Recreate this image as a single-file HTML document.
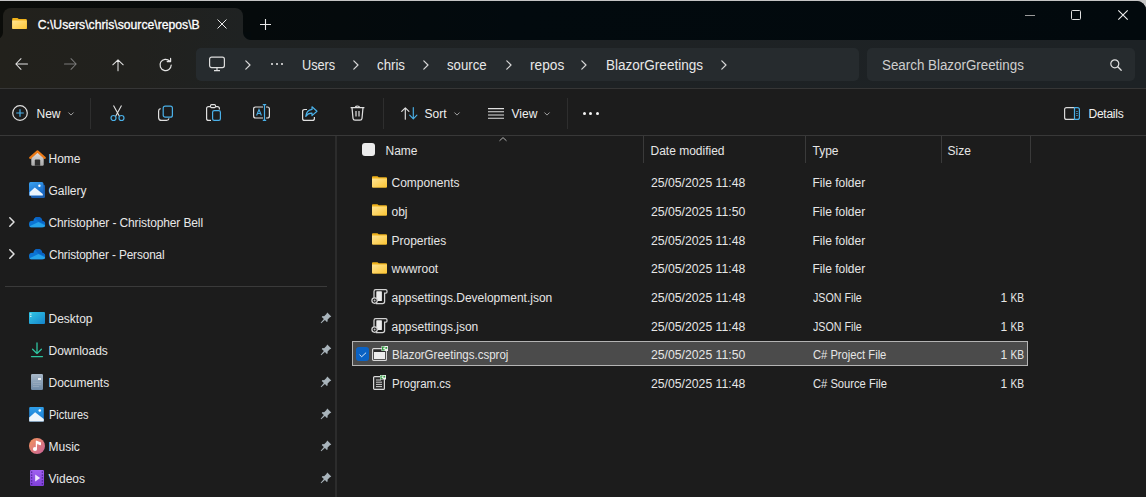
<!DOCTYPE html><html><head><meta charset="utf-8"><style>
html,body{margin:0;padding:0}
body{width:1146px;height:497px;overflow:hidden;position:relative;background:#c4c4c4;font-family:"Liberation Sans",sans-serif}
.a{position:absolute}
.t{position:absolute;white-space:nowrap;line-height:1;}
svg{position:absolute;overflow:visible}
</style></head><body>
<svg width="0" height="0" style="position:absolute"><defs>
<linearGradient id="fg" x1="0" y1="0" x2="1" y2="1"><stop offset="0" stop-color="#ffe494"/><stop offset="1" stop-color="#fbc534"/></linearGradient>
</defs></svg>

<div class="a" style="left:0;top:1px;width:1146px;height:496px;background:#1c1c1c;border-top-right-radius:9px;overflow:hidden">
</div>
<div class="a" style="left:0;top:1px;width:1146px;height:39px;background:linear-gradient(90deg,#0b0c09 0%,#050a0b 22%,#020a0e 45%,#02090d 100%);border-top-right-radius:9px"></div>
<div class="a" style="left:0;top:40px;width:1146px;height:48px;background:linear-gradient(90deg,#22211c 0%,#21211e 12%,#1f2222 21%,#1e2224 50%,#1d2225 100%)"></div>
<div class="a" style="left:3px;top:8px;width:240px;height:33px;background:linear-gradient(90deg,#22211c 0%,#21211e 58%,#1f2222 100%);border-radius:8px 8px 0 0"></div>
<div class="a" style="left:243px;top:32px;width:8px;height:8px;background:radial-gradient(circle at 100% 0, #040a0c 7.5px, #1f2222 8.5px)"></div>
<div class="a" style="left:-5px;top:32px;width:8px;height:8px;background:radial-gradient(circle at 0 0, #0b0c09 7.5px, #22211c 8.5px)"></div>
<svg style="position:absolute;left:12px;top:18px" width="15" height="11" viewBox="0 0 16 12"><path d="M0 1Q0 0 1 0H5.8L7.2 1.2H15Q16 1.2 16 2.2V11Q16 12 15 12H1Q0 12 0 11Z" fill="#f0b21a"/><path d="M0 2.6H16V11Q16 12 15 12H1Q0 12 0 11Z" fill="url(#fg)"/></svg>
<div class="t" style="left:37.8px;top:18.97px;font-size:12.2px;color:#ffffff;-webkit-text-stroke:0.3px #ffffff">C:\Users\chris\source\repos\B</div>
<svg style="left:217px;top:19px" width="10" height="10" viewBox="0 0 10 10"><path d="M0.5 0.5L9.5 9.5M9.5 0.5L0.5 9.5" stroke="#e8e8e8" stroke-width="1"/></svg>
<svg style="left:260px;top:19px" width="11" height="11" viewBox="0 0 11 11"><path d="M5.5 0V11M0 5.5H11" stroke="#e8e8e8" stroke-width="1.1"/></svg>
<div class="a" style="left:1025px;top:15px;width:10px;height:1px;background:#9a9a9a"></div>
<div class="a" style="left:1071px;top:10px;width:8px;height:8px;border:1px solid #e0e0e0;border-radius:1.5px"></div>
<svg style="left:1118px;top:10px" width="10" height="10" viewBox="0 0 10 10"><path d="M0.3 0.3L9.7 9.7M9.7 0.3L0.3 9.7" stroke="#f0f0f0" stroke-width="1.1"/></svg>
<svg style="left:15px;top:58px" width="13" height="12" viewBox="0 0 13 12"><path d="M12.5 6H1M6 0.7L0.8 6L6 11.3" stroke="#e4e4e4" stroke-width="1.05" fill="none" stroke-linecap="round" stroke-linejoin="round"/></svg>
<svg style="left:64px;top:58px" width="13" height="12" viewBox="0 0 13 12"><path d="M0.5 6H12M7 0.7L12.2 6L7 11.3" stroke="#7a7a7a" stroke-width="1.05" fill="none" stroke-linecap="round" stroke-linejoin="round"/></svg>
<svg style="left:111.5px;top:58.5px" width="12" height="13" viewBox="0 0 12 13"><path d="M6 11.8V1M0.8 5.8L6 0.8L11.2 5.8" stroke="#e4e4e4" stroke-width="1.05" fill="none" stroke-linecap="round" stroke-linejoin="round"/></svg>
<svg style="left:159px;top:58px" width="14" height="14" viewBox="0 0 14 14"><path d="M12.2 7A5.6 5.6 0 1 1 10.6 3" stroke="#e4e4e4" stroke-width="1.2" fill="none" stroke-linecap="round"/><path d="M8.2 3.6H11.6V0.4" stroke="#e4e4e4" stroke-width="1.2" fill="none" stroke-linecap="round" stroke-linejoin="round"/></svg>
<div class="a" style="left:196px;top:48px;width:663px;height:33px;background:#262b2e;border-radius:5px"></div>
<svg style="left:209px;top:56px" width="16" height="16" viewBox="0 0 16 16"><rect x="0.6" y="1.2" width="14.8" height="10.4" rx="2" stroke="#dedede" stroke-width="1.2" fill="none"/><path d="M8 11.6V14.2M5 14.6H11" stroke="#dedede" stroke-width="1.2"/></svg>
<svg style="left:245px;top:60px" width="6" height="10" viewBox="0 0 6 10"><path d="M0.8 0.8L5 5L0.8 9.2" stroke="#d8d8d8" stroke-width="1.2" fill="none" stroke-linecap="round" stroke-linejoin="round"/></svg>
<svg style="left:353px;top:60px" width="6" height="10" viewBox="0 0 6 10"><path d="M0.8 0.8L5 5L0.8 9.2" stroke="#d8d8d8" stroke-width="1.2" fill="none" stroke-linecap="round" stroke-linejoin="round"/></svg>
<svg style="left:423px;top:60px" width="6" height="10" viewBox="0 0 6 10"><path d="M0.8 0.8L5 5L0.8 9.2" stroke="#d8d8d8" stroke-width="1.2" fill="none" stroke-linecap="round" stroke-linejoin="round"/></svg>
<svg style="left:506px;top:60px" width="6" height="10" viewBox="0 0 6 10"><path d="M0.8 0.8L5 5L0.8 9.2" stroke="#d8d8d8" stroke-width="1.2" fill="none" stroke-linecap="round" stroke-linejoin="round"/></svg>
<svg style="left:581px;top:60px" width="6" height="10" viewBox="0 0 6 10"><path d="M0.8 0.8L5 5L0.8 9.2" stroke="#d8d8d8" stroke-width="1.2" fill="none" stroke-linecap="round" stroke-linejoin="round"/></svg>
<svg style="left:721px;top:60px" width="6" height="10" viewBox="0 0 6 10"><path d="M0.8 0.8L5 5L0.8 9.2" stroke="#d8d8d8" stroke-width="1.2" fill="none" stroke-linecap="round" stroke-linejoin="round"/></svg>
<div class="a" style="left:271px;top:62.6px;width:2.4px;height:2.4px;border-radius:2px;background:#ececec"></div>
<div class="a" style="left:276px;top:62.6px;width:2.4px;height:2.4px;border-radius:2px;background:#ececec"></div>
<div class="a" style="left:281px;top:62.6px;width:2.4px;height:2.4px;border-radius:2px;background:#ececec"></div>
<div class="t" style="left:301.5px;top:58.45px;font-size:14px;color:#e8e8e8;transform:scaleX(0.908);transform-origin:0 0">Users</div>
<div class="t" style="left:376.5px;top:58.45px;font-size:14px;color:#e8e8e8;transform:scaleX(0.947);transform-origin:0 0">chris</div>
<div class="t" style="left:446.5px;top:58.45px;font-size:14px;color:#e8e8e8;transform:scaleX(0.944);transform-origin:0 0">source</div>
<div class="t" style="left:529.5px;top:58.45px;font-size:14px;color:#e8e8e8;transform:scaleX(0.977);transform-origin:0 0">repos</div>
<div class="t" style="left:605.5px;top:58.45px;font-size:14px;color:#e8e8e8;transform:scaleX(0.966);transform-origin:0 0">BlazorGreetings</div>
<div class="a" style="left:867px;top:48px;width:268px;height:33px;background:#262b2e;border-radius:5px"></div>
<div class="t" style="left:882.3px;top:58.45px;font-size:14px;color:#cfcfcf;transform:scaleX(0.9541);transform-origin:0 0">Search BlazorGreetings</div>
<svg style="left:1110px;top:59px" width="12" height="12" viewBox="0 0 12 12"><circle cx="4.8" cy="4.8" r="4" stroke="#e0e0e0" stroke-width="1.2" fill="none"/><path d="M7.8 7.8L11.2 11.2" stroke="#e0e0e0" stroke-width="1.3" stroke-linecap="round"/></svg>
<div class="a" style="left:0;top:88px;width:1146px;height:1px;background:#363636"></div>
<div class="a" style="left:0;top:135px;width:1146px;height:1px;background:#383838"></div>
<svg style="left:12px;top:105px" width="16" height="16" viewBox="0 0 16 16"><circle cx="8" cy="8" r="7.3" stroke="#e0e0e0" stroke-width="1.2" fill="none"/><path d="M8 4.2V11.8M4.2 8H11.8" stroke="#4ab0e8" stroke-width="1.2"/></svg>
<div class="t" style="left:36.5px;top:107.74px;font-size:12px;color:#f0f0f0;">New</div>
<svg style="left:67.5px;top:111.8px" width="6" height="3.6" viewBox="0 0 7 4"><path d="M0.5 0.5L3.5 3.5L6.5 0.5" stroke="#a8a8a8" stroke-width="1.1" fill="none"/></svg>
<div class="a" style="left:90px;top:98px;width:1px;height:31px;background:#2e2e2e"></div>
<svg style="left:110px;top:105px" width="15" height="16" viewBox="0 0 15 16"><path d="M3.5 0.5L9.5 11.5M11.5 0.5L5.5 11.5" stroke="#e0e0e0" stroke-width="1.1" fill="none"/><circle cx="3.5" cy="13" r="2.5" stroke="#4ab0e8" stroke-width="1.2" fill="none"/><circle cx="11.5" cy="13" r="2.5" stroke="#4ab0e8" stroke-width="1.2" fill="none"/></svg>
<svg style="left:158px;top:105px" width="15" height="16" viewBox="0 0 15 16"><rect x="5.2" y="1.2" width="9.2" height="11" rx="2" stroke="#4ab0e8" stroke-width="1.2" fill="none"/><path d="M2.6 3.6Q0.6 4 0.6 6V12.4Q0.6 15.4 3.6 15.4H8.6Q10.6 15.4 11 13.4" stroke="#e0e0e0" stroke-width="1.2" fill="none"/></svg>
<svg style="left:206px;top:104px" width="15" height="17" viewBox="0 0 15 17"><path d="M4 2.6H2.6Q0.6 2.6 0.6 4.6V14.4Q0.6 16.4 2.6 16.4H5" stroke="#e0e0e0" stroke-width="1.2" fill="none"/><path d="M10 2.6H11.4Q13.4 2.6 13.4 4.6V5.5" stroke="#e0e0e0" stroke-width="1.2" fill="none"/><rect x="4.5" y="0.6" width="5" height="3" rx="1" stroke="#e0e0e0" stroke-width="1.1" fill="none"/><rect x="6.6" y="6.6" width="7.8" height="9.8" rx="1.6" stroke="#4ab0e8" stroke-width="1.2" fill="none"/></svg>
<svg style="left:253px;top:104px" width="17" height="17" viewBox="0 0 17 17"><path d="M10 3H2.6Q0.6 3 0.6 5V12Q0.6 14 2.6 14H10M13 3H14.4Q16.4 3 16.4 5V12Q16.4 14 14.4 14H13" stroke="#e0e0e0" stroke-width="1.2" fill="none"/><path d="M11.5 1V16M9.8 0.6H13.2M9.8 16.4H13.2" stroke="#4ab0e8" stroke-width="1.2" fill="none"/><path d="M3.6 11.5L6 5.5L8.4 11.5M4.5 9.5H7.5" stroke="#4ab0e8" stroke-width="1.1" fill="none"/></svg>
<svg style="left:302px;top:105.8px" width="16" height="15" viewBox="0 0 16 15"><path d="M5 3.5H2.6Q0.6 3.5 0.6 5.5V12.4Q0.6 14.4 2.6 14.4H10.4Q12.4 14.4 12.4 12.4V11" stroke="#e0e0e0" stroke-width="1.2" fill="none"/><path d="M10 0.8L15 5.2L10 9.6V7.2Q6 7 3.8 10.4Q4.4 4.2 10 3.4Z" stroke="#4ab0e8" stroke-width="1.2" fill="none" stroke-linejoin="round"/></svg>
<svg style="left:350px;top:104px" width="15" height="17" viewBox="0 0 15 17"><path d="M0.6 3.6H14.4M5.6 3.6V3Q5.6 2 7.5 2Q9.4 2 9.4 3V3.6M2 3.6L3 14.4Q3.2 16.2 5 16.2H10Q11.8 16.2 12 14.4L13 3.6M6 7V12.6M9 7V12.6" stroke="#e0e0e0" stroke-width="1.2" fill="none"/></svg>
<div class="a" style="left:383px;top:98px;width:1px;height:31px;background:#2e2e2e"></div>
<svg style="left:400.5px;top:107px" width="17" height="12.6" viewBox="0 0 17 12.6"><path d="M4.3 12.2V0.9M0.7 4.4L4.3 0.8L7.9 4.4" stroke="#e0e0e0" stroke-width="1.15" fill="none" stroke-linecap="round" stroke-linejoin="round"/><path d="M12.3 0.5V11.7M8.7 8.2L12.3 11.8L15.9 8.2" stroke="#4ab0e8" stroke-width="1.15" fill="none" stroke-linecap="round" stroke-linejoin="round"/></svg>
<div class="t" style="left:424.5px;top:107.74px;font-size:12px;color:#f0f0f0;">Sort</div>
<svg style="left:453.5px;top:111.8px" width="6" height="3.6" viewBox="0 0 7 4"><path d="M0.5 0.5L3.5 3.5L6.5 0.5" stroke="#a8a8a8" stroke-width="1.1" fill="none"/></svg>
<svg style="left:488px;top:107.6px" width="16" height="12" viewBox="0 0 16 12"><path d="M0 0.6H16M0 3.8H16M0 7H16M0 10.2H16" stroke="#e0e0e0" stroke-width="1.1"/></svg>
<div class="t" style="left:511.5px;top:107.74px;font-size:12px;color:#f0f0f0;">View</div>
<svg style="left:543.5px;top:111.8px" width="6" height="3.6" viewBox="0 0 7 4"><path d="M0.5 0.5L3.5 3.5L6.5 0.5" stroke="#a8a8a8" stroke-width="1.1" fill="none"/></svg>
<div class="a" style="left:567px;top:98px;width:1px;height:31px;background:#2e2e2e"></div>
<div class="a" style="left:583.1px;top:112.4px;width:3px;height:3px;border-radius:2px;background:#f4f4f4"></div>
<div class="a" style="left:589.4px;top:112.4px;width:3px;height:3px;border-radius:2px;background:#f4f4f4"></div>
<div class="a" style="left:595.6px;top:112.4px;width:3px;height:3px;border-radius:2px;background:#f4f4f4"></div>
<svg style="left:1064px;top:107px" width="16" height="13" viewBox="0 0 16 13"><path d="M10.5 0.6H2.6Q0.6 0.6 0.6 2.6V10.4Q0.6 12.4 2.6 12.4H10.5" stroke="#d8d8d8" stroke-width="1.2" fill="none"/><path d="M10.5 0.6H13.4Q15.4 0.6 15.4 2.6V10.4Q15.4 12.4 13.4 12.4H10.5V0.6Z" stroke="#4ab0e8" stroke-width="1.2" fill="none"/><path d="M12.2 4.5H13.8M12.2 6.5H13.8M12.2 8.5H13.8" stroke="#4ab0e8" stroke-width="0.8"/></svg>
<div class="t" style="left:1088.5px;top:107.74px;font-size:12px;color:#f0f0f0;letter-spacing:-0.25px">Details</div>
<div class="a" style="left:335px;top:136px;width:2px;height:361px;background:#2c2c2c"></div>
<div class="a" style="left:5px;top:286px;width:322px;height:1px;background:#3a3a3a"></div>
<svg style="left:28.5px;top:149.85px" width="17" height="16" viewBox="0 0 17 16"><defs><linearGradient id="hb" x1="0" y1="0" x2="0" y2="1"><stop offset="0" stop-color="#e2e2e2"/><stop offset="1" stop-color="#a9a9a9"/></linearGradient></defs><path d="M2.3 7.2V14.6Q2.3 15.8 3.5 15.8H13.5Q14.7 15.8 14.7 14.6V7.2L8.5 1.8Z" fill="url(#hb)"/><path d="M5.8 15.8V10.6Q5.8 9.6 6.8 9.6H10.2Q11.2 9.6 11.2 10.6V15.8Z" fill="#2e2e2e"/><path d="M1.2 7.8L8.5 1.4L15.8 7.8" stroke="#ec7a16" stroke-width="2.2" fill="none" stroke-linecap="round" stroke-linejoin="round"/></svg>
<div class="t" style="left:48.5px;top:153.04px;font-size:12px;color:#e8e8e8;">Home</div>
<svg style="left:28.5px;top:182.35px" width="16" height="16" viewBox="0 0 16 16"><defs><linearGradient id="gg" x1="0" y1="0" x2="0.4" y2="1"><stop offset="0" stop-color="#3aa2f0"/><stop offset="1" stop-color="#1668c8"/></linearGradient></defs><rect x="2" y="2.6" width="14" height="13.4" rx="1.5" fill="#1b5fb0"/><rect x="0" y="0" width="14.4" height="14" rx="1.5" fill="url(#gg)"/><path d="M0.6 13.4V10.2L5.8 5.6L13.8 12V13.4Z" fill="#eaf4fc"/><circle cx="10.4" cy="3.8" r="1.2" fill="#ffffff"/></svg>
<div class="t" style="left:48.5px;top:185.04px;font-size:12px;color:#e8e8e8;">Gallery</div>
<svg style="left:28.5px;top:216.85px" width="16.4" height="10.6" viewBox="0 0 16.4 10.6"><defs><clipPath id="odc222"><circle cx="3.4" cy="7.2" r="3.4"/><circle cx="8.8" cy="4.6" r="4.6"/><circle cx="13" cy="7.3" r="3.3"/><rect x="3.4" y="6" width="9.6" height="4.6"/></clipPath></defs><g clip-path="url(#odc222)"><rect x="0" y="0" width="16.4" height="10.6" fill="#0b74d4"/><path d="M5 0H16.4V7L9.5 4.6Z" fill="#0a62c2"/><path d="M0 10.6V9.4L9.4 5L16.4 8.4V10.6Z" fill="#25a3ea"/></g></svg>
<div class="t" style="left:48.5px;top:217.04px;font-size:12px;color:#e8e8e8;letter-spacing:-0.12px">Christopher - Christopher Bell</div>
<svg style="left:28.5px;top:248.85px" width="16.4" height="10.6" viewBox="0 0 16.4 10.6"><defs><clipPath id="odc254"><circle cx="3.4" cy="7.2" r="3.4"/><circle cx="8.8" cy="4.6" r="4.6"/><circle cx="13" cy="7.3" r="3.3"/><rect x="3.4" y="6" width="9.6" height="4.6"/></clipPath></defs><g clip-path="url(#odc254)"><rect x="0" y="0" width="16.4" height="10.6" fill="#0b74d4"/><path d="M5 0H16.4V7L9.5 4.6Z" fill="#0a62c2"/><path d="M0 10.6V9.4L9.4 5L16.4 8.4V10.6Z" fill="#25a3ea"/></g></svg>
<div class="t" style="left:48.5px;top:249.04px;font-size:12px;color:#e8e8e8;letter-spacing:-0.12px;transform:scaleX(0.984);transform-origin:0 0">Christopher - Personal</div>
<svg style="left:28.5px;top:312.35px" width="16" height="12" viewBox="0 0 16 12"><defs><linearGradient id="dg" x1="0" y1="0" x2="1" y2="1"><stop offset="0" stop-color="#32c8e6"/><stop offset="1" stop-color="#1584cc"/></linearGradient></defs><rect x="0" y="0" width="16" height="12" rx="1" fill="url(#dg)"/><rect x="1.2" y="1.5" width="1.2" height="1.2" fill="#e8f8ff"/><rect x="1.2" y="3.8" width="1.2" height="1.2" fill="#e8f8ff"/></svg>
<div class="t" style="left:48.5px;top:313.04px;font-size:12px;color:#e8e8e8;">Desktop</div>
<svg style="left:28.5px;top:342.35px" width="16" height="16" viewBox="0 0 16 16"><path d="M8 1V11.5M3.6 7.2L8 11.6L12.4 7.2M2.5 14.6H13.5" stroke="#2ec4a0" stroke-width="1.3" fill="none" stroke-linecap="round" stroke-linejoin="round"/></svg>
<div class="t" style="left:48.5px;top:345.04px;font-size:12px;color:#e8e8e8;">Downloads</div>
<svg style="left:28.5px;top:374.35px" width="16" height="16" viewBox="0 0 16 16"><defs><linearGradient id="docg" x1="0" y1="0" x2="0" y2="1"><stop offset="0" stop-color="#a8b8c8"/><stop offset="1" stop-color="#6f8aa6"/></linearGradient></defs><rect x="2" y="0" width="12" height="16" rx="1.2" fill="url(#docg)"/><rect x="9" y="4" width="3" height="2" fill="#eef2f6"/><path d="M4 8.5H12M4 10.5H12M4 12.5H10" stroke="#9fb0c2" stroke-width="0.6"/></svg>
<div class="t" style="left:48.5px;top:377.04px;font-size:12px;color:#e8e8e8;">Documents</div>
<svg style="left:29.1px;top:406.95000000000005px" width="15" height="14.6" viewBox="0 0 16 16"><defs><linearGradient id="pg" x1="0" y1="0" x2="0" y2="1"><stop offset="0" stop-color="#2f9ee8"/><stop offset="1" stop-color="#1877d2"/></linearGradient></defs><rect x="0" y="0" width="16" height="16" rx="1.2" fill="url(#pg)"/><path d="M0 16V11.5L6.5 5.8L16 13.2V16Z" fill="#eef6fc"/><circle cx="11.6" cy="3.8" r="1.4" fill="#ffffff"/></svg>
<div class="t" style="left:48.5px;top:409.04px;font-size:12px;color:#e8e8e8;;transform:scaleX(0.913);transform-origin:0 0">Pictures</div>
<svg style="left:28.5px;top:438.35px" width="16" height="16" viewBox="0 0 16 16"><defs><linearGradient id="mg" x1="0" y1="0" x2="1" y2="1"><stop offset="0" stop-color="#f4955a"/><stop offset="1" stop-color="#c8629a"/></linearGradient></defs><circle cx="8" cy="8" r="8" fill="url(#mg)"/><circle cx="6" cy="11" r="2.1" fill="#fff"/><path d="M7.4 11V3.2L11.4 4.8V6.6L8.4 5.5" stroke="#fff" stroke-width="1.2" fill="#fff" stroke-linejoin="round"/></svg>
<div class="t" style="left:48.5px;top:441.04px;font-size:12px;color:#e8e8e8;">Music</div>
<svg style="left:28.5px;top:470.35px" width="16" height="16" viewBox="0 0 16 16"><defs><linearGradient id="vg" x1="0" y1="0" x2="0" y2="1"><stop offset="0" stop-color="#a060f0"/><stop offset="1" stop-color="#8040d8"/></linearGradient></defs><rect x="1" y="0" width="14" height="16" rx="1.2" fill="url(#vg)"/><path d="M2.6 1.5V15M13.4 1.5V15" stroke="#4a2090" stroke-width="1.4" stroke-dasharray="1.3 1.6"/><path d="M6.2 4.6V11.4L11.2 8Z" fill="#f0e6ff"/></svg>
<div class="t" style="left:48.5px;top:473.04px;font-size:12px;color:#e8e8e8;">Videos</div>
<svg style="left:9px;top:217.35px" width="6" height="10" viewBox="0 0 6 10"><path d="M0.8 0.8L5 5L0.8 9.2" stroke="#e0e0e0" stroke-width="1.5" fill="none" stroke-linecap="round" stroke-linejoin="round"/></svg>
<svg style="left:9px;top:249.35px" width="6" height="10" viewBox="0 0 6 10"><path d="M0.8 0.8L5 5L0.8 9.2" stroke="#e0e0e0" stroke-width="1.5" fill="none" stroke-linecap="round" stroke-linejoin="round"/></svg>
<svg style="left:319.9px;top:312.45000000000005px" width="11.8" height="11.8" viewBox="0 0 11 11"><path d="M6.8 0.5L10.5 4.2L8.9 5.2L7 7.2L7.2 8.6L6.4 9.4L4.6 7.5L1.2 10.6L0.6 10L3.6 6.5L1.6 4.6L2.4 3.8L3.8 4L5.8 2.1Z" fill="#a9b4bb"/></svg>
<svg style="left:319.9px;top:344.45000000000005px" width="11.8" height="11.8" viewBox="0 0 11 11"><path d="M6.8 0.5L10.5 4.2L8.9 5.2L7 7.2L7.2 8.6L6.4 9.4L4.6 7.5L1.2 10.6L0.6 10L3.6 6.5L1.6 4.6L2.4 3.8L3.8 4L5.8 2.1Z" fill="#a9b4bb"/></svg>
<svg style="left:319.9px;top:376.45000000000005px" width="11.8" height="11.8" viewBox="0 0 11 11"><path d="M6.8 0.5L10.5 4.2L8.9 5.2L7 7.2L7.2 8.6L6.4 9.4L4.6 7.5L1.2 10.6L0.6 10L3.6 6.5L1.6 4.6L2.4 3.8L3.8 4L5.8 2.1Z" fill="#a9b4bb"/></svg>
<svg style="left:319.9px;top:408.45000000000005px" width="11.8" height="11.8" viewBox="0 0 11 11"><path d="M6.8 0.5L10.5 4.2L8.9 5.2L7 7.2L7.2 8.6L6.4 9.4L4.6 7.5L1.2 10.6L0.6 10L3.6 6.5L1.6 4.6L2.4 3.8L3.8 4L5.8 2.1Z" fill="#a9b4bb"/></svg>
<svg style="left:319.9px;top:440.45000000000005px" width="11.8" height="11.8" viewBox="0 0 11 11"><path d="M6.8 0.5L10.5 4.2L8.9 5.2L7 7.2L7.2 8.6L6.4 9.4L4.6 7.5L1.2 10.6L0.6 10L3.6 6.5L1.6 4.6L2.4 3.8L3.8 4L5.8 2.1Z" fill="#a9b4bb"/></svg>
<svg style="left:319.9px;top:472.45000000000005px" width="11.8" height="11.8" viewBox="0 0 11 11"><path d="M6.8 0.5L10.5 4.2L8.9 5.2L7 7.2L7.2 8.6L6.4 9.4L4.6 7.5L1.2 10.6L0.6 10L3.6 6.5L1.6 4.6L2.4 3.8L3.8 4L5.8 2.1Z" fill="#a9b4bb"/></svg>
<div class="a" style="left:362px;top:143px;width:13px;height:13px;border-radius:3px;background:#ececec"></div>
<div class="t" style="left:385.5px;top:145.14px;font-size:12px;color:#e6e6e6;">Name</div>
<svg style="left:499px;top:137px" width="8" height="4" viewBox="0 0 8 4"><path d="M0.5 3.8L4 0.6L7.5 3.8" stroke="#c0c0c0" stroke-width="0.9" fill="none"/></svg>
<div class="a" style="left:643px;top:136px;width:1px;height:27px;background:#3a3a3a"></div>
<div class="a" style="left:805px;top:136px;width:1px;height:27px;background:#3a3a3a"></div>
<div class="a" style="left:941px;top:136px;width:1px;height:27px;background:#3a3a3a"></div>
<div class="a" style="left:1030px;top:136px;width:1px;height:27px;background:#3a3a3a"></div>
<div class="t" style="left:650.5px;top:145.14px;font-size:12px;color:#e6e6e6;">Date modified</div>
<div class="t" style="left:812.5px;top:145.14px;font-size:12px;color:#e6e6e6;">Type</div>
<div class="t" style="left:947.5px;top:145.14px;font-size:12px;color:#e6e6e6;">Size</div>
<svg style="position:absolute;left:372px;top:175.8px" width="15" height="11.5" viewBox="0 0 16 12"><path d="M0 1Q0 0 1 0H5.8L7.2 1.2H15Q16 1.2 16 2.2V11Q16 12 15 12H1Q0 12 0 11Z" fill="#f0b21a"/><path d="M0 2.6H16V11Q16 12 15 12H1Q0 12 0 11Z" fill="url(#fg)"/></svg>
<div class="t" style="left:391.5px;top:177.04px;font-size:12px;color:#e6e6e6;">Components</div>
<div class="t" style="left:650.5px;top:177.04px;font-size:12px;color:#e6e6e6;;transform:scaleX(1.019);transform-origin:0 0">25/05/2025 11:48</div>
<div class="t" style="left:812.5px;top:177.04px;font-size:12px;color:#e6e6e6;">File folder</div>
<svg style="position:absolute;left:372px;top:204.46px" width="15" height="11.5" viewBox="0 0 16 12"><path d="M0 1Q0 0 1 0H5.8L7.2 1.2H15Q16 1.2 16 2.2V11Q16 12 15 12H1Q0 12 0 11Z" fill="#f0b21a"/><path d="M0 2.6H16V11Q16 12 15 12H1Q0 12 0 11Z" fill="url(#fg)"/></svg>
<div class="t" style="left:391.5px;top:206.18px;font-size:12px;color:#e6e6e6;">obj</div>
<div class="t" style="left:650.5px;top:206.18px;font-size:12px;color:#e6e6e6;;transform:scaleX(1.019);transform-origin:0 0">25/05/2025 11:50</div>
<div class="t" style="left:812.5px;top:206.18px;font-size:12px;color:#e6e6e6;">File folder</div>
<svg style="position:absolute;left:372px;top:233.12px" width="15" height="11.5" viewBox="0 0 16 12"><path d="M0 1Q0 0 1 0H5.8L7.2 1.2H15Q16 1.2 16 2.2V11Q16 12 15 12H1Q0 12 0 11Z" fill="#f0b21a"/><path d="M0 2.6H16V11Q16 12 15 12H1Q0 12 0 11Z" fill="url(#fg)"/></svg>
<div class="t" style="left:391.5px;top:234.82px;font-size:12px;color:#e6e6e6;">Properties</div>
<div class="t" style="left:650.5px;top:234.82px;font-size:12px;color:#e6e6e6;;transform:scaleX(1.019);transform-origin:0 0">25/05/2025 11:48</div>
<div class="t" style="left:812.5px;top:234.82px;font-size:12px;color:#e6e6e6;">File folder</div>
<svg style="position:absolute;left:372px;top:261.78px" width="15" height="11.5" viewBox="0 0 16 12"><path d="M0 1Q0 0 1 0H5.8L7.2 1.2H15Q16 1.2 16 2.2V11Q16 12 15 12H1Q0 12 0 11Z" fill="#f0b21a"/><path d="M0 2.6H16V11Q16 12 15 12H1Q0 12 0 11Z" fill="url(#fg)"/></svg>
<div class="t" style="left:391.5px;top:263.46px;font-size:12px;color:#e6e6e6;">wwwroot</div>
<div class="t" style="left:650.5px;top:263.46px;font-size:12px;color:#e6e6e6;;transform:scaleX(1.019);transform-origin:0 0">25/05/2025 11:48</div>
<div class="t" style="left:812.5px;top:263.46px;font-size:12px;color:#e6e6e6;">File folder</div>
<svg style="left:368px;top:285.99px" width="22" height="22" viewBox="0 0 22 22"><path d="M6 12.5V5.4Q6 3.7 7.7 3.7H17.7Q19 3.7 19 5V5.9Q19 7 17.9 7H16.6V15.4Q16.6 17.5 14.5 17.5H7.8" stroke="#d2d2d2" stroke-width="1.25" fill="none"/><rect x="8.3" y="5.3" width="5.6" height="9.8" rx="0.6" fill="#ececec"/><circle cx="6.6" cy="14.6" r="2.7" stroke="#d2d2d2" stroke-width="1.25" fill="#1c1c1c"/><circle cx="6.6" cy="14.6" r="1" fill="#bdbdbd"/></svg>
<div class="t" style="left:391.5px;top:292.1px;font-size:12px;color:#e6e6e6;">appsettings.Development.json</div>
<div class="t" style="left:650.5px;top:292.1px;font-size:12px;color:#e6e6e6;;transform:scaleX(1.019);transform-origin:0 0">25/05/2025 11:48</div>
<div class="t" style="left:812.5px;top:292.1px;font-size:12px;color:#e6e6e6;;transform:scaleX(0.892);transform-origin:0 0">JSON File</div>
<div class="t" style="left:1000.6px;top:292.1px;font-size:12px;color:#e6e6e6;">1</div>
<div class="t" style="left:1023.5px;top:292.1px;font-size:12px;color:#e6e6e6;transform:translateX(-100%) scaleX(0.85);transform-origin:100% 0">KB</div>
<svg style="left:368px;top:314.65px" width="22" height="22" viewBox="0 0 22 22"><path d="M6 12.5V5.4Q6 3.7 7.7 3.7H17.7Q19 3.7 19 5V5.9Q19 7 17.9 7H16.6V15.4Q16.6 17.5 14.5 17.5H7.8" stroke="#d2d2d2" stroke-width="1.25" fill="none"/><rect x="8.3" y="5.3" width="5.6" height="9.8" rx="0.6" fill="#ececec"/><circle cx="6.6" cy="14.6" r="2.7" stroke="#d2d2d2" stroke-width="1.25" fill="#1c1c1c"/><circle cx="6.6" cy="14.6" r="1" fill="#bdbdbd"/></svg>
<div class="t" style="left:391.5px;top:320.74px;font-size:12px;color:#e6e6e6;">appsettings.json</div>
<div class="t" style="left:650.5px;top:320.74px;font-size:12px;color:#e6e6e6;;transform:scaleX(1.019);transform-origin:0 0">25/05/2025 11:48</div>
<div class="t" style="left:812.5px;top:320.74px;font-size:12px;color:#e6e6e6;;transform:scaleX(0.892);transform-origin:0 0">JSON File</div>
<div class="t" style="left:1000.6px;top:320.74px;font-size:12px;color:#e6e6e6;">1</div>
<div class="t" style="left:1023.5px;top:320.74px;font-size:12px;color:#e6e6e6;transform:translateX(-100%) scaleX(0.85);transform-origin:100% 0">KB</div>
<div class="a" style="left:352px;top:341px;width:674px;height:23px;border:1px solid #b4b4b4;background:#4b4b4b"></div>
<div class="a" style="left:356px;top:347px;width:13px;height:14px;border-radius:3px;background:#0a62c4"></div>
<svg style="left:358.8px;top:351.6px" width="7.6" height="5.4" viewBox="0 0 9 6"><path d="M0.6 3L3.2 5.4L8.4 0.6" stroke="#ffffff" stroke-width="1" fill="none"/></svg>
<svg style="left:372px;top:345.81px" width="16" height="15" viewBox="0 0 16 15"><rect x="0.6" y="2.6" width="13.8" height="11.8" rx="1" stroke="#d8d8d8" stroke-width="1.2" fill="#2a2a2a"/><rect x="2" y="6" width="11" height="7" fill="#ececec"/><rect x="9.5" y="0" width="6.5" height="5" fill="#f0f0f0"/><path d="M12.6 1.2H10.6V3.8H12.6" stroke="#2e9a3e" stroke-width="1.2" fill="none"/><rect x="13.4" y="1" width="1.8" height="1.8" fill="#2e9a3e"/></svg>
<div class="t" style="left:391.5px;top:349.14px;font-size:12px;color:#e6e6e6;;transform:scaleX(0.959);transform-origin:0 0">BlazorGreetings.csproj</div>
<div class="t" style="left:650.5px;top:349.14px;font-size:12px;color:#e6e6e6;;transform:scaleX(1.019);transform-origin:0 0">25/05/2025 11:50</div>
<div class="t" style="left:812.5px;top:349.14px;font-size:12px;color:#e6e6e6;;transform:scaleX(0.932);transform-origin:0 0">C# Project File</div>
<div class="t" style="left:1000.6px;top:349.14px;font-size:12px;color:#e6e6e6;">1</div>
<div class="t" style="left:1023.5px;top:349.14px;font-size:12px;color:#e6e6e6;transform:translateX(-100%) scaleX(0.85);transform-origin:100% 0">KB</div>
<svg style="left:373px;top:375.47px" width="13" height="15" viewBox="0 0 13 15"><rect x="0.6" y="1.6" width="10.8" height="12.8" rx="1" stroke="#d8d8d8" stroke-width="1.2" fill="#2a2a2a"/><path d="M3 5H8M3 7.2H9M3 9.4H9M3 11.6H9" stroke="#cfcfcf" stroke-width="1"/><rect x="7" y="0" width="6" height="4.5" fill="#f0f0f0"/><path d="M9.6 1H8V3.5H9.6" stroke="#2e9a3e" stroke-width="1.1" fill="none"/><rect x="10.4" y="0.8" width="1.8" height="1.8" fill="#2e9a3e"/></svg>
<div class="t" style="left:391.5px;top:378.02px;font-size:12px;color:#e6e6e6;;transform:scaleX(0.959);transform-origin:0 0">Program.cs</div>
<div class="t" style="left:650.5px;top:378.02px;font-size:12px;color:#e6e6e6;;transform:scaleX(1.019);transform-origin:0 0">25/05/2025 11:48</div>
<div class="t" style="left:812.5px;top:378.02px;font-size:12px;color:#e6e6e6;;transform:scaleX(0.932);transform-origin:0 0">C# Source File</div>
<div class="t" style="left:1000.6px;top:378.02px;font-size:12px;color:#e6e6e6;">1</div>
<div class="t" style="left:1023.5px;top:378.02px;font-size:12px;color:#e6e6e6;transform:translateX(-100%) scaleX(0.85);transform-origin:100% 0">KB</div>
</body></html>
